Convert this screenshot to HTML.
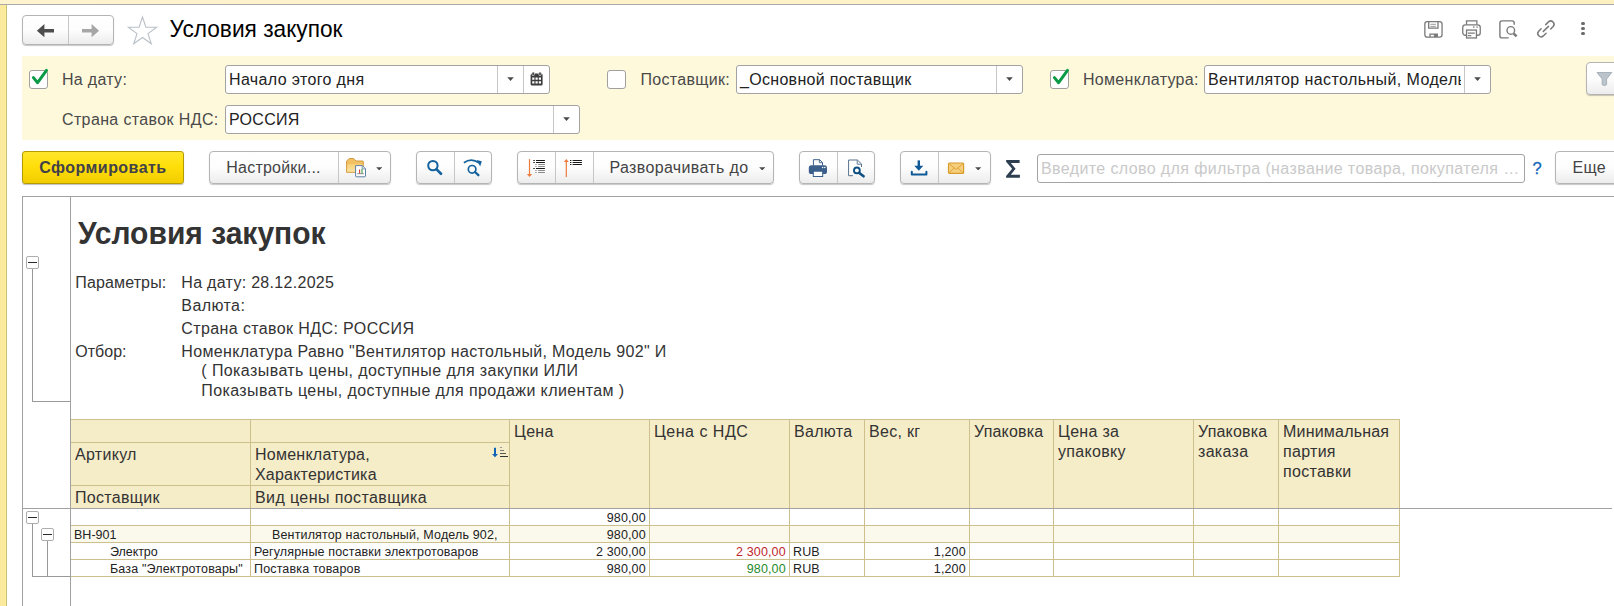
<!DOCTYPE html>
<html lang="ru"><head><meta charset="utf-8"><title>Условия закупок</title>
<style>
html,body{margin:0;padding:0;}
body{width:1614px;height:606px;overflow:hidden;background:#fff;font-family:"Liberation Sans",Arial,sans-serif;position:relative;}
#root{position:absolute;left:0;top:0;width:1614px;height:606px;overflow:hidden;background:#fff;}
#root div,#root svg{position:absolute;box-sizing:border-box;}
.t{white-space:pre;}
.btn{border:1px solid #b4b4b4;border-radius:4px;background:linear-gradient(#ffffff 0%,#fdfdfd 50%,#ececec 100%);box-shadow:0 1px 1px rgba(0,0,0,.22);}
.sep{width:1px;background:#c6c6c6;}
.inp{border:1px solid #a3a3a3;border-radius:3px;background:#fff;}
.cb{border:1px solid #a0a0a0;border-radius:3px;background:#fff;}
.hl{height:1px;}
.vl{width:1px;}
</style></head>
<body><div id="root">

<!-- window frame -->

<div class="" style="left:0px;top:0px;width:1614px;height:4px;background:linear-gradient(90deg,#fef3cf,#fdf1c2);"></div>
<div class="" style="left:0px;top:4px;width:1614px;height:1px;background:#a9a9a9;"></div>
<div class="" style="left:0px;top:5px;width:5px;height:601px;background:#fbea9d;"></div>
<div class="" style="left:5px;top:5px;width:1px;height:601px;background:#fdee98;"></div>
<div class="" style="left:6px;top:5px;width:1px;height:601px;background:#cbbf78;"></div>
<!-- title bar -->

<div class="btn" style="left:22px;top:15px;width:92px;height:30px;"></div>
<div class="sep" style="left:68px;top:16px;width:1px;height:28px;"></div>
<svg style="left:36px;top:22px" width="20" height="18" viewBox="0 0 20 18"><path d="M0.9 8.7 L8.4 2.1 V6.9 H18 V10.5 H8.4 V15.3 Z" fill="#4d4d4d"/></svg>
<svg style="left:80px;top:22px" width="20" height="18" viewBox="0 0 20 18"><path d="M19.1 8.7 L11.6 2.1 V6.9 H2 V10.5 H11.6 V15.3 Z" fill="#a6a6a6"/></svg>
<svg style="left:126px;top:14px" width="34" height="32" viewBox="0 0 34 32"><path d="M16.5 3 L19.9 13.2 L30.6 13.2 L22 19.6 L25.3 29.8 L16.5 23.5 L7.7 29.8 L11 19.6 L2.4 13.2 L13.1 13.2 Z" fill="#fff" stroke="#b9c0c7" stroke-width="1.1" stroke-linejoin="miter"/></svg>
<div class="t" style="top:16.23px;font-size:22.7px;line-height:27px;color:#000;letter-spacing:0px;left:169.50px;transform:scaleY(1.05);transform-origin:0 21.37px;">Условия закупок</div>
<svg style="left:1422px;top:19px" width="23" height="21" viewBox="0 0 23 21" fill="none" stroke="#7a7a7a" stroke-width="1.3"><rect x="2.85" y="2.55" width="17.2" height="15.6" rx="2.4"/><path d="M6.7 2.8 V9.1 H16 V2.8"/><path d="M8.4 5.3 H13.9 M8.4 7.4 H13.9" stroke-width="1" stroke="#9a9a9a"/><path d="M8 18 V15.1 H15.3 V18"/><rect x="11.9" y="15" width="3.6" height="3" fill="#7a7a7a" stroke="none"/></svg>
<svg style="left:1460px;top:18px" width="23" height="22" viewBox="0 0 23 22" fill="none" stroke="#7a7a7a" stroke-width="1.3"><path d="M6.55 6.6 V2.85 H16.85 V6.6"/><rect x="2.75" y="6.85" width="17.5" height="10.4" rx="2.6"/><rect x="6.55" y="12.05" width="9.9" height="7.9" fill="#fff"/><path d="M7.9 15.2 H14.8 M7.9 17.6 H11.3" stroke-width="1.2"/><path d="M13 9.2 H14.5 M16.4 9.2 H17.9" stroke-width="1.2"/></svg>
<svg style="left:1497px;top:18px" width="23" height="22" viewBox="0 0 23 22" fill="none" stroke="#7a7a7a" stroke-width="1.4"><path d="M17.2 6.7 V4.9 Q17.2 2.9 15.2 2.9 H4.9 Q2.9 2.9 2.9 4.9 V17.9 Q2.9 19.9 4.9 19.9 H11.7"/><circle cx="13.8" cy="12.4" r="3.8"/><path d="M16.7 15.6 L19.6 18.4" stroke-width="2.6" stroke-linecap="butt"/></svg>
<svg style="left:1535px;top:18px" width="23" height="22" viewBox="0 0 23 22" fill="none" stroke="#7a7a7a" stroke-width="1.5" stroke-linecap="round"><path d="M10.7 6.6 L13.47 3.87 A3.3 3.3 0 0 1 18.13 8.53 L15.7 11"/><path d="M6.1 10.8 L3.67 13.27 A3.3 3.3 0 0 0 8.33 17.93 L11.1 15.2"/><path d="M8.3 13.4 L13.5 8.4"/></svg>
<div class="" style="left:1581.1px;top:21.700000000000003px;width:3.8px;height:3.8px;background:#6b6b6b;border-radius:50%;"></div>
<div class="" style="left:1581.1px;top:26.6px;width:3.8px;height:3.8px;background:#6b6b6b;border-radius:50%;"></div>
<div class="" style="left:1581.1px;top:31.6px;width:3.8px;height:3.8px;background:#6b6b6b;border-radius:50%;"></div>
<!-- filter panel -->

<div class="" style="left:22px;top:56px;width:1592px;height:84px;background:#fff9dc;"></div>
<div class="cb" style="left:29px;top:70px;width:19px;height:19px;"></div>
<svg style="left:29px;top:66px" width="22" height="24" viewBox="0 0 22 24"><path d="M4.4 11.6 L8.6 16.7 L17.5 4.4" fill="none" stroke="#0b9a45" stroke-width="3" stroke-linecap="round" stroke-linejoin="round"/></svg>
<div class="t" style="top:69.76px;font-size:16px;line-height:19px;color:#4a4a4a;letter-spacing:0.3px;left:62.00px;">На дату:</div>
<div class="inp" style="left:225px;top:65px;width:325px;height:29px;"></div>
<div class="sep" style="left:497px;top:66px;width:1px;height:27px;"></div>
<div class="sep" style="left:523px;top:66px;width:1px;height:27px;"></div>
<div class="t" style="top:69.76px;font-size:16px;line-height:19px;color:#222;letter-spacing:0.36px;left:229.00px;">Начало этого дня</div>
<svg style="left:506.8px;top:77.2px" width="7" height="4" viewBox="0 0 7 4"><path d="M0.2 0.2 H6.8 L3.5 3.9 Z" fill="#4a4a4a"/></svg>
<svg style="left:530px;top:71px" width="14" height="16" viewBox="0 0 14 16"><rect x="0.6" y="2.6" width="12" height="11.8" rx="1.5" fill="#3c3c3c"/><rect x="2" y="1" width="2.4" height="3.6" rx="1.1" fill="#3c3c3c" stroke="#fff" stroke-width=".6"/><rect x="8.8" y="1" width="2.4" height="3.6" rx="1.1" fill="#3c3c3c" stroke="#fff" stroke-width=".6"/><path d="M2.2 6.6 h2.2 v2.2 h-2.2z M5.5 6.6 h2.2 v2.2 h-2.2z M8.8 6.6 h2.2 v2.2 h-2.2z M2.2 10.2 h2.2 v2.2 h-2.2z M5.5 10.2 h2.2 v2.2 h-2.2z M8.8 10.2 h2.2 v2.2 h-2.2z" fill="#fff"/></svg>
<div class="t" style="top:109.76px;font-size:16px;line-height:19px;color:#4a4a4a;letter-spacing:0.37px;left:62.00px;">Страна ставок НДС:</div>
<div class="inp" style="left:225px;top:105px;width:355px;height:29px;"></div>
<div class="sep" style="left:553px;top:106px;width:1px;height:27px;"></div>
<div class="t" style="top:109.76px;font-size:16px;line-height:19px;color:#222;letter-spacing:0.3px;left:229.00px;">РОССИЯ</div>
<svg style="left:562.7px;top:117.2px" width="7" height="4" viewBox="0 0 7 4"><path d="M0.2 0.2 H6.8 L3.5 3.9 Z" fill="#4a4a4a"/></svg>
<div class="cb" style="left:607px;top:70px;width:19px;height:19px;"></div>
<div class="t" style="top:69.76px;font-size:16px;line-height:19px;color:#4a4a4a;letter-spacing:0.3px;left:640.50px;">Поставщик:</div>
<div class="inp" style="left:736px;top:65px;width:287px;height:29px;"></div>
<div class="sep" style="left:996px;top:66px;width:1px;height:27px;"></div>
<div class="t" style="top:69.76px;font-size:16px;line-height:19px;color:#222;letter-spacing:0.3px;left:740.00px;">_Основной поставщик</div>
<svg style="left:1005.8px;top:77.2px" width="7" height="4" viewBox="0 0 7 4"><path d="M0.2 0.2 H6.8 L3.5 3.9 Z" fill="#4a4a4a"/></svg>
<div class="cb" style="left:1050px;top:70px;width:19px;height:19px;"></div>
<svg style="left:1050px;top:66px" width="22" height="24" viewBox="0 0 22 24"><path d="M4.4 11.6 L8.6 16.7 L17.5 4.4" fill="none" stroke="#0b9a45" stroke-width="3" stroke-linecap="round" stroke-linejoin="round"/></svg>
<div class="t" style="top:69.76px;font-size:16px;line-height:19px;color:#4a4a4a;letter-spacing:0.3px;left:1083.00px;">Номенклатура:</div>
<div class="inp" style="left:1204px;top:65px;width:287px;height:29px;"></div>
<div class="sep" style="left:1464px;top:66px;width:1px;height:27px;"></div>
<div class="t" style="top:69.76px;font-size:16px;line-height:19px;color:#222;letter-spacing:0.4px;left:1208.00px;width:253px;overflow:hidden;">Вентилятор настольный, Модель 902</div>
<svg style="left:1473.8px;top:77.2px" width="7" height="4" viewBox="0 0 7 4"><path d="M0.2 0.2 H6.8 L3.5 3.9 Z" fill="#4a4a4a"/></svg>
<div class="btn" style="left:1586px;top:62px;width:40px;height:33px;"></div>
<svg style="left:1594px;top:70px" width="20" height="18" viewBox="0 0 20 18"><path d="M3 2.5 H17.8 L12.6 9 V14.7 Q10.4 16.4 8.2 14.7 V9 Z" fill="#bcc4cb" stroke="#a3adb6" stroke-width=".9" stroke-linejoin="round"/></svg>
<!-- command bar -->

<div class="" style="left:22px;top:151px;width:162px;height:33px;border:1px solid #b39b00;border-radius:3px;background:linear-gradient(#ffe62b 0%,#ffdf0a 45%,#f2cc00 100%);box-shadow:0 1px 1px rgba(0,0,0,.25);"></div>
<div class="t" style="top:158.26px;font-size:16px;line-height:19px;color:#41414a;letter-spacing:0.45px;font-weight:bold;left:39.30px;">Сформировать</div>
<div class="btn" style="left:209px;top:151px;width:182px;height:33px;"></div>
<div class="sep" style="left:338px;top:152px;width:1px;height:31px;"></div>
<div class="t" style="top:158.26px;font-size:16px;line-height:19px;color:#444;letter-spacing:0.22px;left:226.30px;">Настройки...</div>
<svg style="left:344px;top:156px" width="24" height="24" viewBox="0 0 24 24"><defs><linearGradient id="fg" x1="0" y1="0" x2="0" y2="1"><stop offset="0" stop-color="#f7cf74"/><stop offset="1" stop-color="#fbe3a4"/></linearGradient></defs><path d="M2.6 16.3 V5 L5.4 2.5 H9.7 L12 5 H18.5 Q19.3 5 19.3 5.8 V16.3 Z" fill="#f2bf63" stroke="#d39a3d" stroke-width="1" stroke-linejoin="round"/><path d="M3.2 8 H18.7 V15.8 H3.2 Z" fill="url(#fg)"/><path d="M11.6 9.6 H18.3 L21.5 12.8 V20 Q21.5 20.8 20.7 20.8 H12.4 Q11.6 20.8 11.6 20 Z" fill="#fff" stroke="#5f7fa3" stroke-width="1"/><path d="M18.2 9.8 V12.9 H21.3" fill="none" stroke="#5f7fa3" stroke-width=".8"/><path d="M13.3 17.7 H19.8" stroke="#666" stroke-width=".8"/><path d="M15.6 17.3 V13.4" stroke="#e0382c" stroke-width="1.1"/><path d="M18 17.3 V12.9" stroke="#3aa142" stroke-width="1.1"/></svg>
<svg style="left:375.5px;top:166.79999999999998px" width="6.4" height="3.6" viewBox="0 0 6.4 3.6"><path d="M0.2 0.2 H6.2 L3.2 3.5 Z" fill="#4a4a4a"/></svg>
<div class="btn" style="left:416px;top:151px;width:76px;height:33px;"></div>
<div class="sep" style="left:454px;top:152px;width:1px;height:31px;"></div>
<svg style="left:425px;top:158px" width="20" height="20" viewBox="0 0 20 20" fill="none" stroke="#14639e"><circle cx="7.9" cy="7.6" r="4.7" stroke-width="2"/><path d="M11.6 11.4 L16 15.8" stroke-width="2.7" stroke-linecap="round"/></svg>
<svg style="left:461px;top:156px" width="24" height="24" viewBox="0 0 24 24" fill="none" stroke="#14639e"><circle cx="11.1" cy="13.3" r="3.8" stroke-width="1.7"/><path d="M14 16 L17.4 19.2" stroke-width="2.3" stroke-linecap="round"/><path d="M2.9 6.7 Q10.4 1.4 18 6.9" stroke-width="1.7"/><path d="M15.6 3.9 L20.8 5.2 L19.2 10.6 Z" fill="#14639e" stroke="none"/></svg>
<div class="btn" style="left:517px;top:151px;width:257px;height:33px;"></div>
<div class="sep" style="left:555px;top:152px;width:1px;height:31px;"></div>
<div class="sep" style="left:593px;top:152px;width:1px;height:31px;"></div>
<svg style="left:523px;top:156px" width="26" height="24" viewBox="0 0 26 24" fill="none"><path d="M6.5 3.1 V19.5" stroke="#ee7a3c" stroke-width="1.2"/><path d="M3.9 17.9 L6.5 21 L9.1 17.9 Z" fill="#ee7a3c"/><path d="M10.3 4.5 H11.8 M13 4.5 H21.9 M10.3 6.5 H11.8 M13 6.5 H21.9 M10.3 12.5 H11.8 M13 12.5 H21.9" stroke="#1a1a1a" stroke-width="1.1"/><path d="M12.3 8.5 H13.6 M15.2 8.5 H21.9 M12.3 10.5 H13.6 M15.2 10.5 H21.9 M12.3 14.5 H13.6 M15.2 14.5 H21.9 M12.3 16.5 H13.6 M15.2 16.5 H21.9" stroke="#8a8a8a" stroke-width="1"/></svg>
<svg style="left:561px;top:156px" width="26" height="24" viewBox="0 0 26 24" fill="none"><path d="M5.3 4.6 V20.9" stroke="#ee7a3c" stroke-width="1.2"/><path d="M2.8 6.1 L5.3 3 L7.8 6.1 Z" fill="#ee7a3c"/><path d="M9 4.5 H10.4 M11.6 4.5 H20.9 M9 6.5 H10.4 M11.6 6.5 H20.9 M9 8.5 H10.4 M11.6 8.5 H20.9" stroke="#1a1a1a" stroke-width="1.1"/></svg>
<div class="t" style="top:158.26px;font-size:16px;line-height:19px;color:#444;letter-spacing:0.35px;left:609.50px;">Разворачивать до</div>
<svg style="left:758.8px;top:166.79999999999998px" width="6.4" height="3.6" viewBox="0 0 6.4 3.6"><path d="M0.2 0.2 H6.2 L3.2 3.5 Z" fill="#4a4a4a"/></svg>
<div class="btn" style="left:799px;top:151px;width:76px;height:33px;"></div>
<div class="sep" style="left:837px;top:152px;width:1px;height:31px;"></div>
<svg style="left:807px;top:156px" width="22" height="24" viewBox="0 0 22 24"><path d="M6.4 9.6 V3.7 H12.6 L15.5 6.5 V9.6" fill="#fff" stroke="#3b5f8a" stroke-width="1"/><path d="M12.4 3.9 V6.7 H15.3" fill="none" stroke="#3b5f8a" stroke-width=".9"/><rect x="1.8" y="9.2" width="18.2" height="8.8" rx="2.6" fill="#3b5f8a"/><rect x="6.3" y="15.2" width="9.4" height="5.3" fill="#fff" stroke="#3b5f8a" stroke-width="1"/><circle cx="15.6" cy="11.4" r=".75" fill="#fff"/><circle cx="17.8" cy="11.4" r=".75" fill="#fff"/></svg>
<svg style="left:845px;top:156px" width="24" height="24" viewBox="0 0 24 24" fill="none"><path d="M8 19.7 H3.6 V4 H12.4 L16.5 8 V11" fill="#fff" stroke="#55708d" stroke-width="1"/><path d="M12.2 4.2 V8.2 H16.3" stroke="#55708d" stroke-width=".9"/><circle cx="11.9" cy="14.4" r="2.9" stroke="#0f4f82" stroke-width="1.9" fill="#fff"/><path d="M14.3 16.9 L18.6 20.3" stroke="#0f4f82" stroke-width="2.6" stroke-linecap="round"/></svg>
<div class="btn" style="left:900px;top:151px;width:91px;height:33px;"></div>
<div class="sep" style="left:938px;top:152px;width:1px;height:31px;"></div>
<svg style="left:908px;top:157px" width="22" height="22" viewBox="0 0 22 22" fill="none" stroke="#0f5a96"><path d="M10.8 3.4 V9.6" stroke-width="2.4"/><path d="M6.3 8.7 L10.8 13.7 L15.3 8.7 Z" fill="#0f5a96" stroke="none"/><path d="M3.8 14.8 V17.5 H18.4 V14.8" stroke-width="2" stroke-linejoin="round" stroke-linecap="round"/></svg>
<svg style="left:946px;top:160px" width="20" height="16" viewBox="0 0 20 16"><rect x="2.5" y="3" width="15.1" height="10.4" rx="1" fill="#f6cf7c" stroke="#d89c2b" stroke-width="1.2"/><path d="M3.2 3.8 L10 9.4 L16.9 3.8 M3.2 12.8 L8.2 8 M16.9 12.8 L11.9 8" fill="none" stroke="#e0a43a" stroke-width="1"/></svg>
<svg style="left:975.3px;top:166.79999999999998px" width="6.4" height="3.6" viewBox="0 0 6.4 3.6"><path d="M0.2 0.2 H6.2 L3.2 3.5 Z" fill="#4a4a4a"/></svg>
<svg style="left:1004px;top:158px" width="18" height="22" viewBox="0 0 18 22"><path d="M2.1 2 H15.6 V5 H6.8 L11.6 10.8 L6.8 16.8 H15.9 V19.8 H2.1 V18 L8.1 10.8 L2.1 3.8 Z" fill="#2c3e50"/></svg>
<div class="inp" style="left:1037px;top:154px;width:488px;height:29px;"></div>
<div class="t" style="top:159.26px;font-size:16px;line-height:19px;color:#c9c9c9;letter-spacing:0.39px;left:1041.00px;">Введите слово для фильтра (название товара, покупателя …</div>
<div class="t" style="top:157.88px;font-size:16.5px;line-height:20px;color:#1668ba;letter-spacing:0px;left:1532.40px;-webkit-text-stroke:0.3px #1668ba;">?</div>
<div class="btn" style="left:1555px;top:151px;width:80px;height:33px;"></div>
<div class="t" style="top:158.26px;font-size:16px;line-height:19px;color:#444;letter-spacing:0.3px;left:1572.50px;">Еще</div>
<!-- report -->

<div class="" style="left:22px;top:196px;width:1592px;height:1px;background:#a1a1a1;"></div>
<div class="" style="left:22px;top:196px;width:1px;height:410px;background:#a1a1a1;"></div>
<div class="" style="left:70px;top:196px;width:1px;height:410px;background:#a1a1a1;"></div>
<div class="" style="left:22px;top:508px;width:1590px;height:1px;background:#a1a1a1;"></div>
<div class="t" style="top:215.60px;font-size:30px;line-height:36px;color:#333;letter-spacing:0px;font-weight:bold;left:78.00px;transform:scaleY(1.03);transform-origin:0 28.40px;">Условия закупок</div>
<div class="t" style="top:272.66px;font-size:16px;line-height:19px;color:#333;letter-spacing:0.13px;left:75.30px;">Параметры:</div>
<div class="t" style="top:272.66px;font-size:16px;line-height:19px;color:#333;letter-spacing:0.3px;left:181.30px;">На дату: 28.12.2025</div>
<div class="t" style="top:295.66px;font-size:16px;line-height:19px;color:#333;letter-spacing:0.42px;left:181.30px;">Валюта:</div>
<div class="t" style="top:318.66px;font-size:16px;line-height:19px;color:#333;letter-spacing:0.39px;left:181.30px;">Страна ставок НДС: РОССИЯ</div>
<div class="t" style="top:341.66px;font-size:16px;line-height:19px;color:#333;letter-spacing:0px;left:75.30px;">Отбор:</div>
<div class="t" style="top:341.66px;font-size:16px;line-height:19px;color:#333;letter-spacing:0.33px;left:181.30px;">Номенклатура Равно "Вентилятор настольный, Модель 902" И</div>
<div class="t" style="top:361.46px;font-size:16px;line-height:19px;color:#333;letter-spacing:0.41px;left:201.30px;">( Показывать цены, доступные для закупки ИЛИ</div>
<div class="t" style="top:381.26px;font-size:16px;line-height:19px;color:#333;letter-spacing:0.4px;left:201.30px;">Показывать цены, доступные для продажи клиентам )</div>
<div class="" style="left:26px;top:256px;width:13px;height:13px;border:1px solid #adadad;background:#fff;border-radius:2px;"></div>
<div class="" style="left:28px;top:262px;width:9px;height:1px;background:#2a2a2a;"></div>
<div class="" style="left:32px;top:269px;width:1px;height:133px;background:#999;"></div>
<div class="" style="left:32px;top:401px;width:38px;height:1px;background:#999;"></div>
<div class="" style="left:26px;top:511px;width:13px;height:13px;border:1px solid #adadad;background:#fff;border-radius:2px;"></div>
<div class="" style="left:28px;top:517px;width:9px;height:1px;background:#2a2a2a;"></div>
<div class="" style="left:32px;top:524px;width:1px;height:53px;background:#999;"></div>
<div class="" style="left:32px;top:576px;width:38px;height:1px;background:#999;"></div>
<div class="" style="left:41px;top:528px;width:13px;height:13px;border:1px solid #adadad;background:#fff;border-radius:2px;"></div>
<div class="" style="left:43px;top:534px;width:9px;height:1px;background:#2a2a2a;"></div>
<div class="" style="left:47px;top:541px;width:1px;height:35px;background:#999;"></div>
<div class="" style="left:70px;top:419px;width:1330px;height:90px;background:#f5ecc8;"></div>
<div class="" style="left:71px;top:526px;width:1328px;height:16px;background:#fbf9ec;"></div>
<div class="" style="left:70px;top:419px;width:1330px;height:1px;background:#cdc08c;"></div>
<div class="" style="left:70px;top:442px;width:440px;height:1px;background:#cdc08c;"></div>
<div class="" style="left:70px;top:485px;width:440px;height:1px;background:#cdc08c;"></div>
<div class="" style="left:70px;top:525px;width:1330px;height:1px;background:#cdc08c;"></div>
<div class="" style="left:70px;top:542px;width:1330px;height:1px;background:#cdc08c;"></div>
<div class="" style="left:70px;top:559px;width:1330px;height:1px;background:#cdc08c;"></div>
<div class="" style="left:70px;top:576px;width:1330px;height:1px;background:#cdc08c;"></div>
<div class="" style="left:250px;top:419px;width:1px;height:158px;background:#cdc08c;"></div>
<div class="" style="left:509px;top:419px;width:1px;height:158px;background:#cdc08c;"></div>
<div class="" style="left:649px;top:419px;width:1px;height:158px;background:#cdc08c;"></div>
<div class="" style="left:789px;top:419px;width:1px;height:158px;background:#cdc08c;"></div>
<div class="" style="left:864px;top:419px;width:1px;height:158px;background:#cdc08c;"></div>
<div class="" style="left:969px;top:419px;width:1px;height:158px;background:#cdc08c;"></div>
<div class="" style="left:1053px;top:419px;width:1px;height:158px;background:#cdc08c;"></div>
<div class="" style="left:1193px;top:419px;width:1px;height:158px;background:#cdc08c;"></div>
<div class="" style="left:1278px;top:419px;width:1px;height:158px;background:#cdc08c;"></div>
<div class="" style="left:1399px;top:419px;width:1px;height:158px;background:#cdc08c;"></div>
<div class="" style="left:70px;top:419px;width:1px;height:90px;background:#cdc08c;"></div>
<div class="" style="left:22px;top:508px;width:1590px;height:1px;background:#a1a1a1;"></div>
<div class="" style="left:70px;top:196px;width:1px;height:410px;background:#a1a1a1;"></div>
<div class="t" style="top:444.66px;font-size:16px;line-height:19px;color:#333;letter-spacing:0.3px;left:75.00px;">Артикул</div>
<div class="t" style="top:488.16px;font-size:16px;line-height:19px;color:#333;letter-spacing:0.3px;left:75.00px;">Поставщик</div>
<div class="t" style="top:444.66px;font-size:16px;line-height:19px;color:#333;letter-spacing:0.24px;left:255.00px;">Номенклатура,</div>
<div class="t" style="top:464.66px;font-size:16px;line-height:19px;color:#333;letter-spacing:0.2px;left:255.00px;">Характеристика</div>
<div class="t" style="top:488.16px;font-size:16px;line-height:19px;color:#333;letter-spacing:0.4px;left:255.00px;">Вид цены поставщика</div>
<div class="t" style="top:421.66px;font-size:16px;line-height:19px;color:#333;letter-spacing:0.3px;left:514.00px;">Цена</div>
<div class="t" style="top:421.66px;font-size:16px;line-height:19px;color:#333;letter-spacing:0.5px;left:654.00px;">Цена с НДС</div>
<div class="t" style="top:421.66px;font-size:16px;line-height:19px;color:#333;letter-spacing:0.3px;left:794.00px;">Валюта</div>
<div class="t" style="top:421.66px;font-size:16px;line-height:19px;color:#333;letter-spacing:0.3px;left:869.00px;">Вес, кг</div>
<div class="t" style="top:421.66px;font-size:16px;line-height:19px;color:#333;letter-spacing:0.2px;left:974.00px;">Упаковка</div>
<div class="t" style="top:421.66px;font-size:16px;line-height:19px;color:#333;letter-spacing:0.3px;left:1058.00px;">Цена за</div>
<div class="t" style="top:441.66px;font-size:16px;line-height:19px;color:#333;letter-spacing:0.3px;left:1058.00px;">упаковку</div>
<div class="t" style="top:421.66px;font-size:16px;line-height:19px;color:#333;letter-spacing:0.2px;left:1198.00px;">Упаковка</div>
<div class="t" style="top:441.66px;font-size:16px;line-height:19px;color:#333;letter-spacing:0.3px;left:1198.00px;">заказа</div>
<div class="t" style="top:421.66px;font-size:16px;line-height:19px;color:#333;letter-spacing:0.2px;left:1283.00px;">Минимальная</div>
<div class="t" style="top:441.66px;font-size:16px;line-height:19px;color:#333;letter-spacing:0.3px;left:1283.00px;">партия</div>
<div class="t" style="top:461.66px;font-size:16px;line-height:19px;color:#333;letter-spacing:0.3px;left:1283.00px;">поставки</div>
<svg style="left:490px;top:446px" width="19" height="13" viewBox="0 0 19 13"><path d="M5 1.8 V8.4" stroke="#0f64b8" stroke-width="2"/><path d="M2 8 L5 11.2 L8 8 Z" fill="#0f64b8"/><path d="M10 1.5 H12" stroke="#9a9a9a" stroke-width="1"/><path d="M10 4.5 H14" stroke="#777" stroke-width="1"/><path d="M10 7.5 H16" stroke="#555" stroke-width="1"/><path d="M10 10.5 H18" stroke="#333" stroke-width="1"/></svg>
<div class="t" style="top:511.07px;font-size:12.5px;line-height:15px;color:#222;letter-spacing:0.15px;right:968.20px;text-align:right;">980,00</div>
<div class="t" style="top:527.97px;font-size:12.5px;line-height:15px;color:#222;letter-spacing:0.02px;left:74.00px;">ВН-901</div>
<div class="t" style="top:527.97px;font-size:12.5px;line-height:15px;color:#222;letter-spacing:0.15px;left:272.00px;">Вентилятор настольный, Модель 902,</div>
<div class="t" style="top:527.97px;font-size:12.5px;line-height:15px;color:#222;letter-spacing:0.15px;right:968.20px;text-align:right;">980,00</div>
<div class="t" style="top:545.07px;font-size:12.5px;line-height:15px;color:#222;letter-spacing:-0.06px;left:110.00px;">Электро</div>
<div class="t" style="top:545.07px;font-size:12.5px;line-height:15px;color:#222;letter-spacing:0.15px;left:254.00px;">Регулярные поставки электротоваров</div>
<div class="t" style="top:545.07px;font-size:12.5px;line-height:15px;color:#222;letter-spacing:0.15px;right:968.20px;text-align:right;">2 300,00</div>
<div class="t" style="top:545.07px;font-size:12.5px;line-height:15px;color:#c0272d;letter-spacing:0.15px;right:828.20px;text-align:right;">2 300,00</div>
<div class="t" style="top:545.07px;font-size:12.5px;line-height:15px;color:#222;letter-spacing:0.15px;left:793.00px;">RUB</div>
<div class="t" style="top:545.07px;font-size:12.5px;line-height:15px;color:#222;letter-spacing:0.15px;right:648.20px;text-align:right;">1,200</div>
<div class="t" style="top:561.87px;font-size:12.5px;line-height:15px;color:#222;letter-spacing:0.15px;left:110.00px;">База "Электротовары"</div>
<div class="t" style="top:561.87px;font-size:12.5px;line-height:15px;color:#222;letter-spacing:0.15px;left:254.00px;">Поставка товаров</div>
<div class="t" style="top:561.87px;font-size:12.5px;line-height:15px;color:#222;letter-spacing:0.15px;right:968.20px;text-align:right;">980,00</div>
<div class="t" style="top:561.87px;font-size:12.5px;line-height:15px;color:#1f8b2c;letter-spacing:0.15px;right:828.20px;text-align:right;">980,00</div>
<div class="t" style="top:561.87px;font-size:12.5px;line-height:15px;color:#222;letter-spacing:0.15px;left:793.00px;">RUB</div>
<div class="t" style="top:561.87px;font-size:12.5px;line-height:15px;color:#222;letter-spacing:0.15px;right:648.20px;text-align:right;">1,200</div>
</div></body></html>
